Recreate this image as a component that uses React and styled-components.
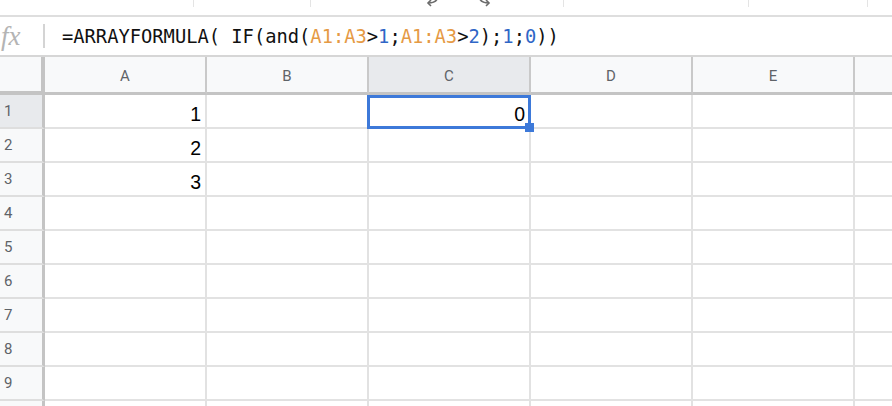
import React from 'react';
import styled, { createGlobalStyle } from 'styled-components';

const GlobalStyle = createGlobalStyle`
  html, body {
    margin: 0;
    padding: 0;
    background: #ffffff;
    overflow: hidden;
  }
  * {
    box-sizing: border-box;
  }
`;

const Page = styled.div`
  width: 892px;
  height: 406px;
  display: flex;
  flex-direction: column;
  overflow: hidden;
  background: #ffffff;
`;

const Toolbar = styled.div`
  height: 17px;
  flex: none;
  display: grid;
  grid-template-columns: 193px 117px 122px 51px 80px 185px 119px 1fr;
  align-items: start;
  border-bottom: 2px solid #dedede;
  overflow: hidden;
`;

const ToolSep = styled.div`
  width: 1px;
  height: 7px;
  background: #e4e4e4;
`;

const ToolIcon = styled.svg`
  display: block;
  margin-top: -8px;
  margin-left: -7px;
`;

const FormulaBar = styled.div`
  height: 40px;
  flex: none;
  display: flex;
  align-items: center;
  border-bottom: 2px solid #d6d6d6;
`;

const FxLabel = styled.div`
  width: 45px;
  flex: none;
  display: flex;
  align-items: center;
  justify-content: space-between;
  padding-left: 1px;
  font-family: 'Liberation Serif', 'DejaVu Serif', serif;
  font-style: italic;
  font-size: 27px;
  color: #b4b4b4;
  line-height: 1;
`;

const FxDivider = styled.span`
  width: 2px;
  height: 24px;
  background: #d4d4d4;
`;

const Formula = styled.div`
  margin-left: 17px;
  font-family: 'DejaVu Sans Mono', 'Liberation Mono', monospace;
  font-size: 18.75px;
  color: #111111;
  white-space: pre;
  padding-top: 1px;
`;

const Token = styled.span`
  color: ${p => (p.$kind === 'ref' ? '#e59a45' : p.$kind === 'num' ? '#2f66c6' : '#111111')};
`;

const Grid = styled.div`
  flex: 1;
  display: grid;
  grid-template-columns: 45px repeat(6, 162px);
  grid-auto-rows: 34px;
  grid-template-rows: 38px;
  overflow: hidden;
`;

const Corner = styled.div`
  background: #f8f9fa;
  border-right: 4px solid #c4c4c4;
  border-bottom: 4px solid #c4c4c4;
`;

const ColHeader = styled.div`
  display: flex;
  align-items: center;
  justify-content: center;
  background: ${p => (p.$active ? '#e8eaed' : '#f8f9fa')};
  border-right: 2px solid #c9c9c9;
  border-bottom: 3px solid #c4c4c4;
  font-family: Roboto, 'Liberation Sans', sans-serif;
  font-size: 15px;
  color: #5f6368;
  padding-top: 2px;
`;

const RowHeader = styled.div`
  display: flex;
  align-items: center;
  padding-left: 4px;
  background: ${p => (p.$active ? '#e8eaed' : '#f8f9fa')};
  border-right: 3px solid #c4c4c4;
  border-bottom: 2px solid #dedede;
  font-family: Roboto, 'Liberation Sans', sans-serif;
  font-size: 15px;
  color: #5f6368;
`;

const Cell = styled.div`
  position: relative;
  display: flex;
  align-items: flex-end;
  justify-content: flex-end;
  padding: 0 4px 2px 0;
  border-right: 2px solid #e2e2e2;
  border-bottom: 2px solid #e2e2e2;
  font-family: 'Liberation Sans', Arial, sans-serif;
  font-size: 19.5px;
  color: #000000;
  line-height: 1.15;
`;

const Selection = styled.div`
  position: absolute;
  z-index: 2;
  top: 0;
  left: -2px;
  right: -2px;
  bottom: -2px;
  border: 3px solid #3d79d9;
  pointer-events: none;
`;

const FillHandle = styled.div`
  position: absolute;
  right: -6px;
  bottom: -6px;
  width: 9px;
  height: 9px;
  background: #3d79d9;
`;

const columns = ['A', 'B', 'C', 'D', 'E', ''];

const values = {
  '1-A': '1',
  '2-A': '2',
  '3-A': '3',
  '1-C': '0',
};

const formula = [
  ['=ARRAYFORMULA( IF(and(', 'txt'],
  ['A1:A3', 'ref'],
  ['>', 'txt'],
  ['1', 'num'],
  [';', 'txt'],
  ['A1:A3', 'ref'],
  ['>', 'txt'],
  ['2', 'num'],
  [');', 'txt'],
  ['1', 'num'],
  [';', 'txt'],
  ['0', 'num'],
  ['))', 'txt'],
];

const UndoArrow = ({ flip }) => (
  <ToolIcon width="16" height="16" viewBox="0 0 16 16" style={flip ? { transform: 'scaleX(-1)' } : undefined}>
    <path d="M13 3 C13 9 8 11 3 11" fill="none" stroke="#6b6b6b" strokeWidth="1.6" />
    <path d="M6 8 L3 11 L6 14" fill="none" stroke="#6b6b6b" strokeWidth="1.6" />
  </ToolIcon>
);

const App = () => {
  // row 10 only peeks in at the bottom edge, its label is below the fold
  const rows = Array.from({ length: 10 }, (_, i) => i + 1);

  return (
    <Page>
      <GlobalStyle />
      <Toolbar>
        <div />
        <ToolSep />
        <ToolSep />
        <UndoArrow />
        <UndoArrow flip />
        <ToolSep />
        <ToolSep />
        <ToolSep />
      </Toolbar>

      <FormulaBar>
        <FxLabel>
          <span>fx</span>
          <FxDivider />
        </FxLabel>
        <Formula>
          {formula.map(([text, kind], i) => (
            <Token key={i} $kind={kind}>{text}</Token>
          ))}
        </Formula>
      </FormulaBar>

      <Grid>
        <Corner />
        {columns.map((c, i) => (
          <ColHeader key={i} $active={c === 'C'}>{c}</ColHeader>
        ))}
        {rows.map(r => (
          <React.Fragment key={r}>
            <RowHeader $active={r === 1}>{r < 10 ? r : ''}</RowHeader>
            {columns.map((c, i) => {
              const selected = r === 1 && c === 'C';
              return (
                <Cell key={i}>
                  {values[`${r}-${c}`]}
                  {selected && (
                    <Selection>
                      <FillHandle />
                    </Selection>
                  )}
                </Cell>
              );
            })}
          </React.Fragment>
        ))}
      </Grid>
    </Page>
  );
};

export default App;
